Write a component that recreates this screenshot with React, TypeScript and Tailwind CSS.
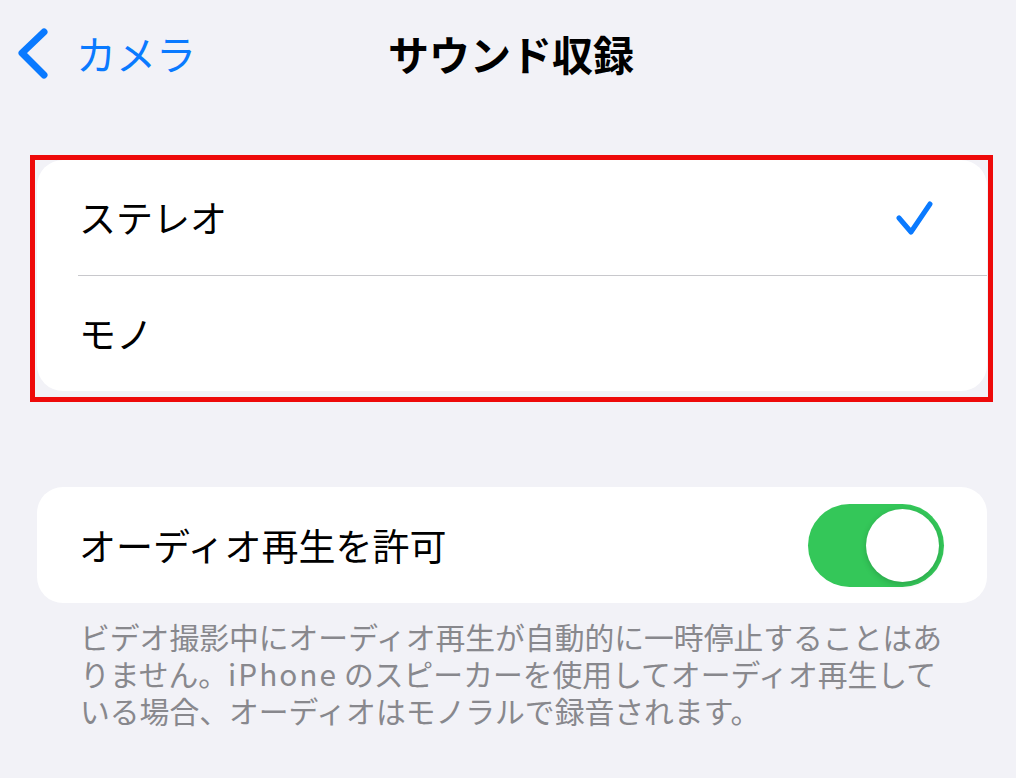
export default function App() {
  return (
    <div
      className="w-[1016px] h-[778px] overflow-hidden bg-[#f2f2f7] text-black"
      style={{ fontFamily: '"Noto Sans CJK JP", "Noto Sans", sans-serif' }}
    >
      {/* ナビゲーションバー */}
      <div className="relative flex h-[106px] items-center">
        <div className="flex items-center pl-[17px]">
          <svg width="34" height="52" viewBox="0 0 34 52" className="mr-[25px]">
            <polyline
              points="27,5 5,26 27,48"
              fill="none"
              stroke="#0a7aff"
              strokeWidth="7"
              strokeLinecap="round"
              strokeLinejoin="round"
            />
          </svg>
          <span className="text-[40px] leading-none text-[#0a7aff]">カメラ</span>
        </div>
        <div className="absolute inset-x-0 flex justify-center pl-[6px] pointer-events-none">
          <span className="text-[41px] font-bold leading-none">サウンド収録</span>
        </div>
      </div>

      {/* 収録方式 */}
      <div className="relative ml-[37px] mt-[54px] w-[950px]">
        <div className="overflow-hidden rounded-[26px] bg-white">
          <div className="flex h-[115px] items-center justify-between pl-[42px] pr-[53px]">
            <span className="text-[37px] leading-none">ステレオ</span>
            <svg width="38" height="36" viewBox="0 0 38 36">
              <polyline
                points="3,18 15,32 34,4"
                fill="none"
                stroke="#0a7aff"
                strokeWidth="5"
                strokeLinecap="round"
                strokeLinejoin="round"
              />
            </svg>
          </div>
          <div className="ml-[41px] h-px bg-[#c8c8cc]" />
          <div className="flex h-[115px] items-center pl-[42px]">
            <span className="text-[37px] leading-none">モノ</span>
          </div>
        </div>
        <div className="pointer-events-none absolute -left-[7px] -top-[5px] -right-[6px] -bottom-[11px] border-[5px] border-[#ee0a0a]" />
      </div>

      {/* オーディオ再生 */}
      <div className="ml-[37px] mt-[96px] w-[950px]">
        <div className="flex h-[116px] items-center justify-between rounded-[26px] bg-white pl-[42px] pr-[43px]">
          <span className="text-[37px] leading-none">オーディオ再生を許可</span>
          <div className="flex h-[83px] w-[136px] items-center justify-end rounded-full bg-[#34c759] pr-[5px]">
            <div className="h-[73px] w-[73px] rounded-full bg-white shadow-[0_2px_6px_rgba(0,0,0,0.18)]" />
          </div>
        </div>
        <div className="whitespace-nowrap pl-[43px] pt-[15px] text-[29.8px] leading-[37px] text-[#88888d]">
          <div>ビデオ撮影中にオーディオ再生が自動的に一時停止することはあ</div>
          <div>
            りません。<span className="mr-[6px] tracking-[2px]">iPhone</span>のスピーカーを使用してオーディオ再生して
          </div>
          <div>いる場合、オーディオはモノラルで録音されます。</div>
        </div>
      </div>
    </div>
  );
}
